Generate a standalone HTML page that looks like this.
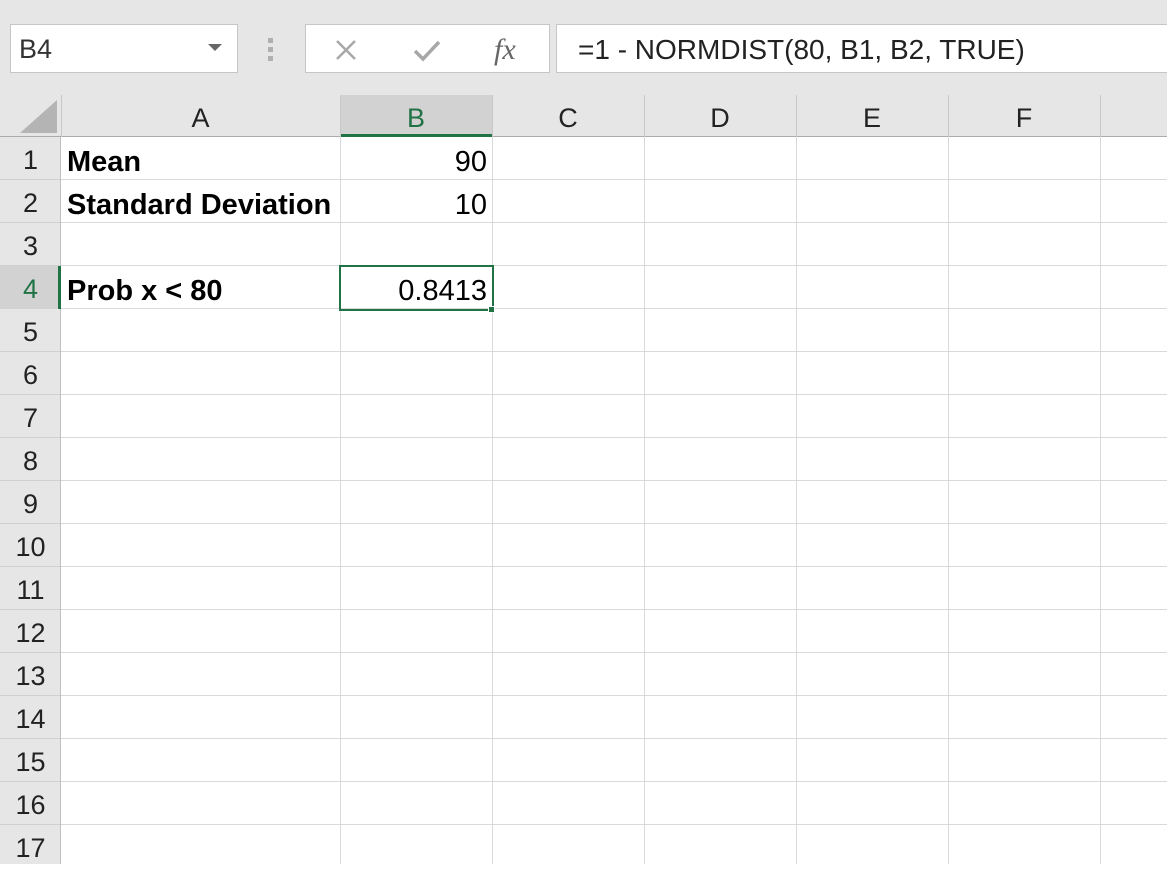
<!DOCTYPE html>
<html><head><meta charset="utf-8"><style>
*{margin:0;padding:0;box-sizing:border-box}
body{width:1167px;height:864px;overflow:hidden;background:#fff;font-family:"Liberation Sans",sans-serif;position:relative}
.a{position:absolute}
.top{left:0;top:0;width:1167px;height:95px;background:#e6e6e6}
.box{background:#fff;border:1px solid #c6c6c6}
.grid{left:61px;top:137px;width:1106px;height:727px;
background-image:repeating-linear-gradient(to bottom,transparent 0,transparent 42px,#d9d9d9 42px,#d9d9d9 43px)}
.v{top:137px;width:1px;height:727px;background:#d9d9d9}
.hv{top:95px;width:1px;height:42px;background:#c8c8c8}
.rh{left:0;top:137px;width:61px;height:727px;background:#e6e6e6;border-right:1px solid #c0c0c0;
background-image:repeating-linear-gradient(to bottom,transparent 0,transparent 42px,#d0d0d0 42px,#d0d0d0 43px)}
.rn{left:0;width:61px;height:43px;line-height:47px;text-align:center;font-size:27px;color:#222}
.ch{top:95px;height:42px;line-height:46px;text-align:center;font-size:27px;color:#222}
.t{font-size:29px;line-height:51px;height:43px;color:#000;white-space:nowrap}
.b{font-weight:bold}
</style></head><body>
<div class="a top"></div>
<div class="a box" style="left:10px;top:24px;width:228px;height:49px"></div>
<div class="a" style="left:19px;top:24px;line-height:51px;font-size:27px;color:#333">B4</div>
<div class="a" style="left:208px;top:44px;width:0;height:0;border-left:7px solid transparent;border-right:7px solid transparent;border-top:7px solid #666"></div>
<div class="a" style="left:268px;top:38px;width:5px;height:5px;background:#b0b0b0"></div>
<div class="a" style="left:268px;top:47px;width:5px;height:5px;background:#b0b0b0"></div>
<div class="a" style="left:268px;top:56px;width:5px;height:5px;background:#b0b0b0"></div>
<div class="a box" style="left:305px;top:24px;width:245px;height:49px"></div>
<svg class="a" style="left:334px;top:38px" width="24" height="24"><path d="M3 3L21 21M21 3L3 21" stroke="#a8a8a8" stroke-width="2.5"/></svg>
<svg class="a" style="left:412px;top:38px" width="30" height="24"><path d="M3 13L11 21L27 4" stroke="#a8a8a8" stroke-width="3.5" fill="none"/></svg>
<div class="a" style="left:494px;top:33px;font-family:'Liberation Serif',serif;font-style:italic;font-size:30px;color:#666">fx</div>
<div class="a box" style="left:556px;top:24px;width:620px;height:49px"></div>
<div class="a" style="left:578px;top:24px;line-height:52px;font-size:28px;color:#222;white-space:nowrap">=1 - NORMDIST(80, B1, B2, TRUE)</div>
<div class="a" style="left:0;top:95px;width:1167px;height:42px;background:#e6e6e6;border-bottom:1px solid #ababab"></div>
<div class="a" style="left:340px;top:95px;width:152px;height:42px;background:#d2d2d2;border-bottom:3px solid #217346"></div>
<svg class="a" style="left:20px;top:100px" width="38" height="34"><path d="M37 0L37 33L0 33Z" fill="#b4b4b4"/></svg>
<div class="a hv" style="left:61px"></div><div class="a hv" style="left:340px"></div><div class="a hv" style="left:492px"></div><div class="a hv" style="left:644px"></div><div class="a hv" style="left:796px"></div><div class="a hv" style="left:948px"></div><div class="a hv" style="left:1100px"></div>
<div class="a ch" style="left:61px;width:279px">A</div>
<div class="a ch" style="left:340px;width:152px;color:#217346">B</div>
<div class="a ch" style="left:492px;width:152px">C</div>
<div class="a ch" style="left:644px;width:152px">D</div>
<div class="a ch" style="left:796px;width:152px">E</div>
<div class="a ch" style="left:948px;width:152px">F</div>
<div class="a grid"></div>
<div class="a v" style="left:340px"></div><div class="a v" style="left:492px"></div><div class="a v" style="left:644px"></div><div class="a v" style="left:796px"></div><div class="a v" style="left:948px"></div><div class="a v" style="left:1100px"></div>
<div class="a rh"></div>
<div class="a" style="left:0;top:266px;width:61px;height:43px;background:#d2d2d2;border-right:3px solid #217346"></div>
<div class="a rn" style="top:137px">1</div>
<div class="a rn" style="top:180px">2</div>
<div class="a rn" style="top:223px">3</div>
<div class="a rn" style="top:266px;color:#217346">4</div>
<div class="a rn" style="top:309px">5</div>
<div class="a rn" style="top:352px">6</div>
<div class="a rn" style="top:395px">7</div>
<div class="a rn" style="top:438px">8</div>
<div class="a rn" style="top:481px">9</div>
<div class="a rn" style="top:524px">10</div>
<div class="a rn" style="top:567px">11</div>
<div class="a rn" style="top:610px">12</div>
<div class="a rn" style="top:653px">13</div>
<div class="a rn" style="top:696px">14</div>
<div class="a rn" style="top:739px">15</div>
<div class="a rn" style="top:782px">16</div>
<div class="a rn" style="top:825px">17</div>
<div class="a t b" style="left:67px;top:137px">Mean</div>
<div class="a t b" style="left:67px;top:180px">Standard Deviation</div>
<div class="a t b" style="left:67px;top:266px">Prob x &lt; 80</div>
<div class="a t" style="left:340px;top:137px;width:147px;text-align:right">90</div>
<div class="a t" style="left:340px;top:180px;width:147px;text-align:right">10</div>
<div class="a t" style="left:340px;top:266px;width:147px;text-align:right">0.8413</div>
<div class="a" style="left:339px;top:265px;width:155px;height:46px;border:2px solid #217346"></div>
<div class="a" style="left:488px;top:306px;width:7px;height:7px;background:#217346;border:1px solid #fff"></div>
</body></html>
